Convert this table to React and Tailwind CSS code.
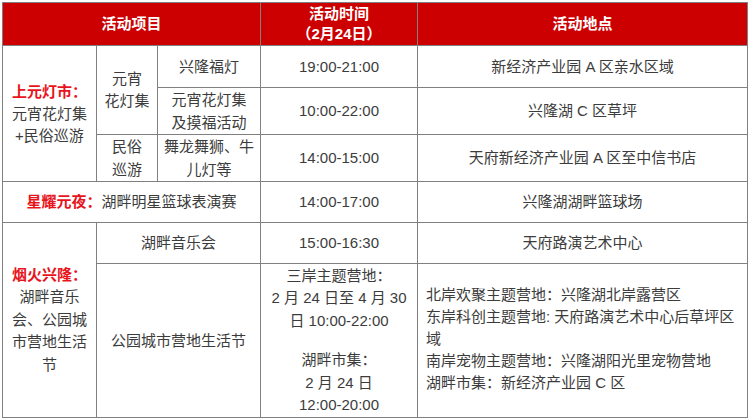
import React from 'react';

const cell = 'border border-[#808080] text-center align-middle p-0';
const red = 'font-bold text-[#e8141c]';

function App() {
    return (
        <div className="pl-[2px] pt-[2px] bg-white min-h-screen font-['Liberation_Sans','Noto_Sans_CJK_SC',sans-serif] text-[15px] leading-[22px] text-[#3c3c3c]">
            <table className="table-fixed border-collapse w-[745px]">
                <colgroup>
                    <col className="w-[94px]" />
                    <col className="w-[61px]" />
                    <col className="w-[103px]" />
                    <col className="w-[157px]" />
                    <col className="w-[330px]" />
                </colgroup>
                <thead>
                    <tr className="h-[43px] bg-[#cc0000] text-white font-bold">
                        <th colSpan={3} className={cell}>活动项目</th>
                        <th className={`${cell} leading-[20px]`}>
                            活动时间<br />（2月24日）
                        </th>
                        <th className={cell}>活动地点</th>
                    </tr>
                </thead>
                <tbody>
                    <tr className="h-[42px]">
                        <td rowSpan={3} className={cell}>
                            <span className={red}>上元灯市：</span><br />
                            元宵花灯集<br />
                            +民俗巡游
                        </td>
                        <td rowSpan={2} className={cell}>元宵<br />花灯集</td>
                        <td className={cell}>兴隆福灯</td>
                        <td className={cell}>19:00-21:00</td>
                        <td className={cell}>新经济产业园 A 区亲水区域</td>
                    </tr>
                    <tr className="h-[46px]">
                        <td className={`${cell} leading-[23px]`}>元宵花灯集<br />及摸福活动</td>
                        <td className={cell}>10:00-22:00</td>
                        <td className={cell}>兴隆湖 C 区草坪</td>
                    </tr>
                    <tr className="h-[47px]">
                        <td className={`${cell} leading-[23px]`}>民俗<br />巡游</td>
                        <td className={`${cell} leading-[23px]`}>舞龙舞狮、牛<br />儿灯等</td>
                        <td className={cell}>14:00-15:00</td>
                        <td className={cell}>天府新经济产业园 A 区至中信书店</td>
                    </tr>
                    <tr className="h-[41px]">
                        <td colSpan={3} className={cell}>
                            <span className={red}>星耀元夜：</span>湖畔明星篮球表演赛
                        </td>
                        <td className={cell}>14:00-17:00</td>
                        <td className={cell}>兴隆湖湖畔篮球场</td>
                    </tr>
                    <tr className="h-[41px]">
                        <td rowSpan={2} className={`${cell} leading-[22.5px]`}>
                            <span className={red}>烟火兴隆：</span><br />
                            湖畔音乐<br />
                            会、公园城<br />
                            市营地生活<br />
                            节
                        </td>
                        <td colSpan={2} className={cell}>湖畔音乐会</td>
                        <td className={cell}>15:00-16:30</td>
                        <td className={cell}>天府路演艺术中心</td>
                    </tr>
                    <tr className="h-[154px]">
                        <td colSpan={2} className={cell}>公园城市营地生活节</td>
                        <td className={`${cell} leading-[22.5px]`}>
                            <div>三岸主题营地：</div>
                            <div>2 月 24 日至 4 月 30</div>
                            <div>日 10:00-22:00</div>
                            <div className="h-[17px]" />
                            <div>湖畔市集：</div>
                            <div>2 月 24 日</div>
                            <div>12:00-20:00</div>
                        </td>
                        <td className={`${cell} !text-left pl-[8px] pb-[3px]`}>
                            北岸欢聚主题营地：兴隆湖北岸露营区<br />
                            东岸科创主题营地: 天府路演艺术中心后草坪区<br />
                            域<br />
                            南岸宠物主题营地：兴隆湖阳光里宠物营地<br />
                            湖畔市集：新经济产业园 C 区
                        </td>
                    </tr>
                </tbody>
            </table>
        </div>
    );
}

export default App;
